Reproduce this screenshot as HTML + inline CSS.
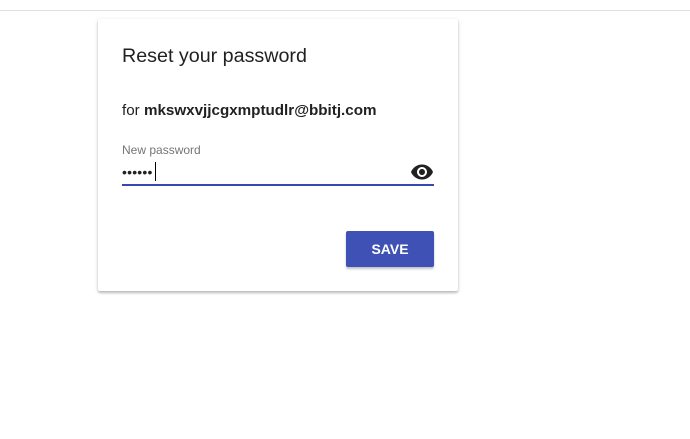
<!DOCTYPE html>
<html><head><style>
body{margin:0;width:690px;height:439px;background:#fff;font-family:"Liberation Sans",Arial,sans-serif;position:relative;overflow:hidden}
.line{position:absolute;left:0;top:10px;width:690px;height:1px;background:#e0e0e0}
.card{position:absolute;left:98px;top:19px;width:360px;height:272px;background:#fff;box-shadow:0 2px 2px rgba(0,0,0,.2),0 1px 5px rgba(0,0,0,.12);border-radius:2px}
.t{position:absolute;left:24px;top:26px;font-size:19.7px;color:#212121}
.f{position:absolute;left:24px;top:83px;font-size:15.2px;color:#212121}
.f b{font-weight:bold}
.l{position:absolute;left:24px;top:124px;font-size:12px;color:#757575}
.dots{position:absolute;left:24px;top:145px;font-size:14px;color:#212121;letter-spacing:0.2px}
.cur{position:absolute;left:57px;top:143px;width:1px;height:19px;background:#000}
.u{position:absolute;left:24px;top:165px;width:312px;height:2px;background:#3949ab}
.eye{position:absolute;left:313px;top:145px}
.btn{position:absolute;left:248px;top:212px;width:88px;height:36px;background:#3f51b5;color:#fff;font-weight:bold;font-size:14px;text-align:center;line-height:36px;border-radius:2px;box-shadow:0 2px 2px rgba(0,0,0,.24)}
</style></head><body>
<div class="line"></div>
<div class="card">
<div class="t">Reset your password</div>
<div class="f">for <b>mkswxvjjcgxmptudlr@bbitj.com</b></div>
<div class="l">New password</div>
<div class="dots">••••••</div>
<div class="cur"></div>
<svg class="eye" width="22" height="16" viewBox="1 4 22 16"><path fill="#212121" d="M12 4.5C7 4.5 2.730 7.61 1 12c1.73 4.39 6 7.5 11 7.5s9.27-3.11 11-7.5c-1.73-4.39-6-7.5-11-7.5zM12 17c-2.76 0-5-2.24-5-5s2.24-5 5-5 5 2.24 5 5-2.24 5-5 5zm0-8c-1.66 0-3 1.34-3 3s1.34 3 3 3 3-1.34 3-3-1.34-3-3-3z"/></svg>
<div class="u"></div>
<div class="btn">SAVE</div>
</div>
</body></html>
